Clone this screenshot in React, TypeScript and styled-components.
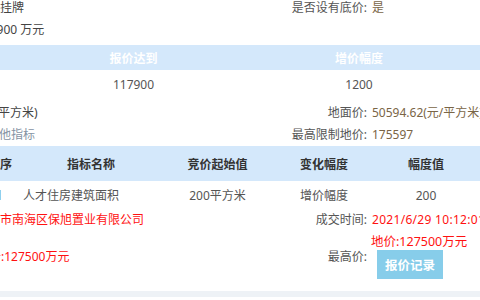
import React from "react";
import styled, { createGlobalStyle } from "styled-components";

const Global = createGlobalStyle`
  html, body { margin: 0; padding: 0; background: #ffffff; overflow: hidden; }
  body {
    font-family: "Noto Sans", "Noto Sans CJK SC", sans-serif;
    font-size: 12px;
    color: #555555;
  }
`;

const Page = styled.div`
  width: 480px;
  height: 300px;
  margin-top: -3px;
  display: flex;
  flex-direction: column;
  overflow: hidden;
`;

const InfoRow = styled.div<{ $h?: number; $mt?: number }>`
  display: grid;
  grid-template-columns: 240px 127px 1fr;
  align-items: center;
  height: ${(p) => p.$h ?? 22}px;
  margin-top: ${(p) => p.$mt ?? 0}px;
  line-height: 22px;
  white-space: nowrap;
`;

const LeftValue = styled.div<{ $shift: number; $tone?: "dark" | "red" | "muted" }>`
  margin-left: ${(p) => p.$shift}px;
  color: ${(p) =>
    p.$tone === "red" ? "#ff1111" : p.$tone === "muted" ? "#8593a3" : "#444444"};
  overflow: visible;
`;

const Label = styled.div`
  text-align: right;
  color: #555555;
`;

const Value = styled.div<{ $red?: boolean }>`
  padding-left: 5px;
  color: ${(p) => (p.$red ? "#ff1111" : "#7a6546")};
  letter-spacing: ${(p) => (p.$red ? "0.3px" : "0")};
  overflow: visible;
`;

const Stack = styled.div`
  display: flex;
  flex-direction: column;
  align-items: flex-start;
  padding-left: 4px;
  padding-top: 2px;
  padding-bottom: 2px;
`;

const RedLine = styled.div`
  color: #ff1111;
  line-height: 16px;
  font-size: 12.5px;
`;

const RecordButton = styled.button`
  margin-left: 6px;
  width: 66px;
  height: 29px;
  border: none;
  background: #87cdea;
  color: #ffffff;
  font-family: inherit;
  font-size: 12.5px;
  font-weight: bold;
  padding: 0;
  cursor: pointer;
`;

const Table = styled.div<{ $cols: string; $ml: number; $mt?: number }>`
  display: grid;
  grid-template-columns: ${(p) => p.$cols};
  margin-left: ${(p) => p.$ml}px;
  margin-top: ${(p) => p.$mt ?? 0}px;
  width: calc(100% - ${(p) => p.$ml}px);
`;

const HeadCell = styled.div<{ $h: number; $light?: boolean }>`
  height: ${(p) => p.$h}px;
  background: #d4e8fb;
  display: flex;
  align-items: center;
  justify-content: center;
  font-weight: bold;
  color: ${(p) => (p.$light ? "#ffffff" : "#333333")};
  white-space: nowrap;
`;

const BodyCell = styled.div<{ $h: number; $left?: boolean }>`
  height: ${(p) => p.$h}px;
  display: flex;
  align-items: center;
  justify-content: ${(p) => (p.$left ? "flex-start" : "center")};
  color: #555555;
  white-space: nowrap;
`;

const Check = styled.span`
  width: 10px;
  height: 10px;
  margin-left: 14px;
  border: 1px solid #8fd0ee;
  background: #e8f6fd;
  box-sizing: border-box;
`;

const Footer = styled.div`
  margin-top: auto;
  height: 6px;
  background: #eef2f6;
`;

export default function App() {
  return (
    <>
      <Global />
      <Page>
        <InfoRow>
          <LeftValue $shift={-24}>网上挂牌</LeftValue>
          <Label>是否设有底价:</Label>
          <Value>是</Value>
        </InfoRow>
        <InfoRow>
          <LeftValue $shift={-24}>117900 万元</LeftValue>
          <Label />
          <Value />
        </InfoRow>

        <Table $cols="21px 225px 226px 1fr" $ml={0} $mt={4}>
          <HeadCell $h={25} $light />
          <HeadCell $h={25} $light>报价达到</HeadCell>
          <HeadCell $h={25} $light>增价幅度</HeadCell>
          <HeadCell $h={25} $light />
          <BodyCell $h={28} />
          <BodyCell $h={28}>117900</BodyCell>
          <BodyCell $h={28}>1200</BodyCell>
          <BodyCell $h={28} />
        </Table>

        <InfoRow $mt={4}>
          <LeftValue $shift={-22}>(元/平方米)</LeftValue>
          <Label>地面价:</Label>
          <Value>50594.62(元/平方米)</Value>
        </InfoRow>
        <InfoRow>
          <LeftValue $shift={-13} $tone="muted">其他指标</LeftValue>
          <Label>最高限制地价:</Label>
          <Value>175597</Value>
        </InfoRow>

        <Table $cols="46px 136px 117px 96px 1fr" $ml={-23}>
          <HeadCell $h={35}>顺序</HeadCell>
          <HeadCell $h={35}>指标名称</HeadCell>
          <HeadCell $h={35}>竞价起始值</HeadCell>
          <HeadCell $h={35}>变化幅度</HeadCell>
          <HeadCell $h={35}>幅度值</HeadCell>
          <BodyCell $h={28} $left>
            <Check />
          </BodyCell>
          <BodyCell $h={28} $left>人才住房建筑面积</BodyCell>
          <BodyCell $h={28}>200平方米</BodyCell>
          <BodyCell $h={28}>增价幅度</BodyCell>
          <BodyCell $h={28}>200</BodyCell>
        </Table>

        <InfoRow>
          <LeftValue $shift={-24} $tone="red">佛山市南海区保旭置业有限公司</LeftValue>
          <Label>成交时间:</Label>
          <Value $red>2021/6/29 10:12:01</Value>
        </InfoRow>
        <InfoRow $h={49} $mt={1}>
          <LeftValue $shift={-35} $tone="red">成交价:127500万元</LeftValue>
          <Label>最高价:</Label>
          <Stack>
            <RedLine>地价:127500万元</RedLine>
            <RecordButton>报价记录</RecordButton>
          </Stack>
        </InfoRow>

        <Footer />
      </Page>
    </>
  );
}
